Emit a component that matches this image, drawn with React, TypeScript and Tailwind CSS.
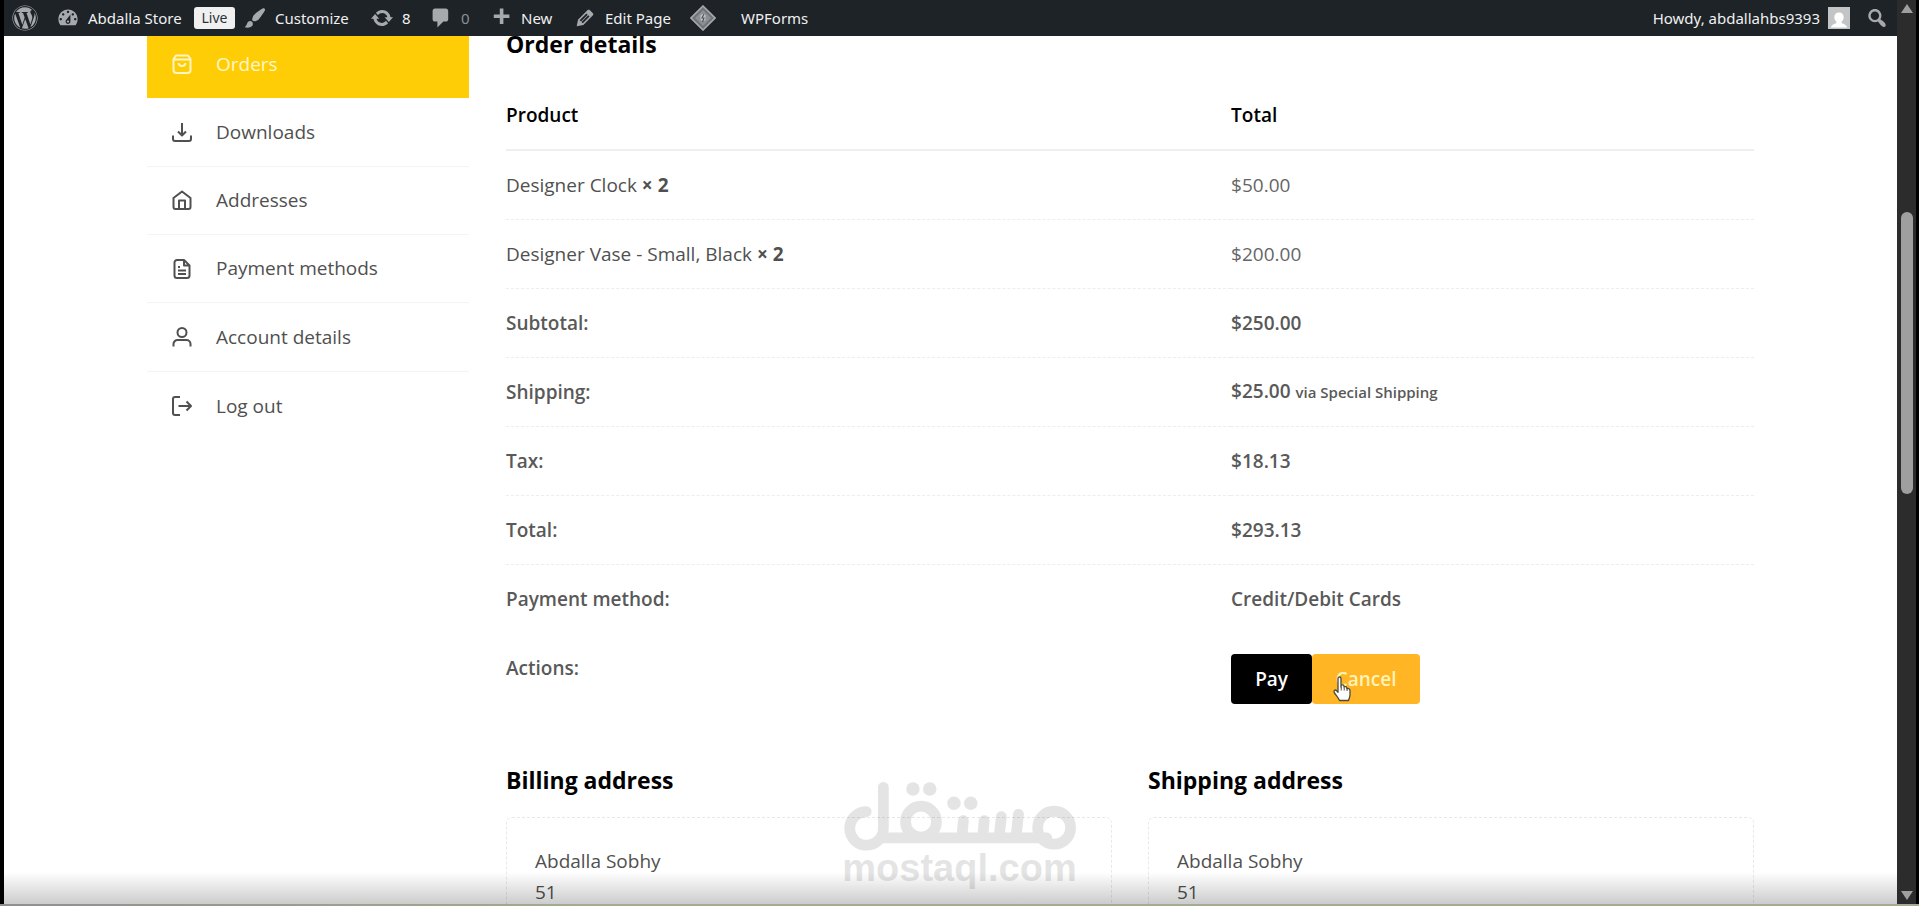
import React from 'react';
import { FaWordpress } from 'react-icons/fa';

const dashicons = {
  gauge:
    'M3.76 16h12.48c1.1-1.37 1.76-3.11 1.76-5 0-4.42-3.58-8-8-8s-8 3.58-8 8c0 1.89.66 3.63 1.76 5zM10 4c.55 0 1 .45 1 1s-.45 1-1 1-1-.45-1-1 .45-1 1-1zM6 6c.55 0 1 .45 1 1s-.45 1-1 1-1-.45-1-1 .45-1 1-1zm8 0c.55 0 1 .45 1 1s-.45 1-1 1-1-.45-1-1 .45-1 1-1zm-5.37 5.55L12 7v6c0 1.1-.9 2-2 2s-2-.9-2-2c0-.57.24-1.08.63-1.45zM4 10c.55 0 1 .45 1 1s-.45 1-1 1-1-.45-1-1 .45-1 1-1zm12 0c.55 0 1 .45 1 1s-.45 1-1 1-1-.45-1-1 .45-1 1-1zm-5 3c0-.55-.45-1-1-1s-1 .45-1 1 .45 1 1 1 1-.45 1-1z',
  brush:
    'M18.33 3.57s.27-.8-.31-1.36c-.53-.52-1.22-.24-1.22-.24-.61.3-5.76 3.47-7.67 5.57-.86.96-2.06 3.79-1.09 4.82.92.98 3.96-.17 4.79-1 2.06-2.06 5.21-7.17 5.5-7.79zM1.4 17.65c2.37-1.56 1.46-3.41 3.23-4.64.93-.65 2.22-.62 3.08.29.63.67.8 2.57-.16 3.46-1.57 1.45-4 1.55-6.15.89z',
  update:
    'M10.2 3.28c3.53 0 6.43 2.61 6.92 6h2.08l-3.5 4-3.5-4h2.32c-.45-1.97-2.21-3.45-4.32-3.45-1.45 0-2.73.71-3.54 1.78L4.95 5.66C6.23 4.2 8.11 3.28 10.2 3.28zm-.4 13.44c-3.52 0-6.43-2.61-6.92-6H.8l3.5-4c1.17 1.33 2.33 2.67 3.5 4H5.48c.45 1.97 2.21 3.45 4.32 3.45 1.45 0 2.73-.71 3.54-1.78l1.71 1.95c-1.28 1.46-3.15 2.38-5.25 2.38z',
  comment: 'M5 2h9c1.1 0 2 .9 2 2v7c0 1.1-.9 2-2 2h-2l-5 5v-5H5c-1.1 0-2-.9-2-2V4c0-1.1.9-2 2-2z',
  plus: 'M17 7v3h-5v5H9v-5H4V7h5V2h3v5h5z',
  edit:
    'M13.89 3.39l2.71 2.72c.46.46.42 1.24.03 1.64l-8.01 8.02-5.56 1.16 1.16-5.58s7.6-7.63 7.99-8.03c.39-.39 1.22-.39 1.68.07zm-2.73 2.79l-5.59 5.61 1.11 1.11 5.54-5.65zm-2.97 8.23l5.58-5.6-1.07-1.08-5.59 5.6z',
  search:
    'M12.14 4.18c1.87 1.87 2.11 4.75.72 6.89.12.1.22.21.36.31.2.16.47.36.81.59.34.24.56.39.66.47.42.31.73.57.94.78.32.32.6.65.84 1 .25.35.44.69.59 1.04.14.35.21.68.18 1-.02.32-.14.59-.36.81s-.49.34-.81.36c-.31.02-.65-.04-.99-.19-.35-.14-.7-.34-1.04-.59-.35-.24-.68-.52-1-.84-.21-.21-.47-.52-.77-.93-.1-.13-.25-.35-.47-.66-.22-.32-.4-.57-.56-.78-.16-.2-.29-.35-.44-.5-2.07 1.09-4.69.76-6.44-.98-2.14-2.15-2.14-5.64 0-7.78 2.15-2.15 5.63-2.15 7.78 0zm-1.41 6.36c1.36-1.37 1.36-3.58 0-4.95-1.37-1.37-3.59-1.37-4.95 0-1.37 1.37-1.37 3.58 0 4.95 1.36 1.37 3.58 1.37 4.95 0z',
};

function Dashicon({ name }: { name: keyof typeof dashicons }) {
  return (
    <svg viewBox="0 0 20 20" className="size-6 shrink-0 fill-[#a7aaad]" aria-hidden="true">
      <path d={dashicons[name]} />
    </svg>
  );
}

function AdminBar() {
  return (
    <header className="relative z-10 flex h-9 shrink-0 items-center justify-between bg-[#1d2327] pl-2 pr-2 font-['Noto_Sans','Open_Sans',sans-serif] text-[15px] leading-5 text-[#f0f0f1]">
      <nav className="flex items-center" aria-label="Toolbar">
        <a href="#about" aria-label="About WordPress" className="mr-[18px]">
          <FaWordpress className="size-[26px] text-[#a7aaad]" />
        </a>
        <a href="#store" className="mr-2 flex items-center gap-2">
          <Dashicon name="gauge" />
          <span className="w-[98px] whitespace-nowrap">Abdalla Store</span>
          <span className="flex h-[22px] w-[41px] items-center justify-center rounded-[3px] bg-[#f0f0f1] text-sm text-[#2c3338]">
            Live
          </span>
        </a>
        <a href="#customize" className="mr-[18px] flex items-center gap-2">
          <Dashicon name="brush" />
          <span className="w-[77px]">Customize</span>
        </a>
        <a href="#updates" className="mr-[17px] flex items-center gap-2">
          <Dashicon name="update" />
          <span className="w-[10px]">8</span>
        </a>
        <a href="#comments" className="mr-[18px] flex items-center gap-2">
          <Dashicon name="comment" />
          <span className="w-[10px] text-[#8c8f94]">0</span>
        </a>
        <a href="#new" className="mr-[18px] flex items-center gap-2">
          <Dashicon name="plus" />
          <span className="w-[34px]">New</span>
        </a>
        <a href="#edit" className="mr-4 flex items-center gap-2">
          <Dashicon name="edit" />
          <span className="w-[69px] whitespace-nowrap">Edit Page</span>
        </a>
        <a href="#performance" aria-label="Performance" className="mr-[25px]">
          <svg viewBox="0 0 26 26" className="size-[26px]" aria-hidden="true">
            <path d="M13 1 25 13 13 25 1 13z" fill="#6f7376" stroke="#a7aaad" strokeWidth="1.6" />
            <path d="M13 5 21 13 13 21 5 13z" fill="#8d9093" />
            <path d="M10.5 10.5c1-2 4-2 5 0v4c-1 2-4 2-5 0z" fill="#c3c4c7" />
            <path d="M13.8 9.2 12 13h2l-1.5 4" fill="none" stroke="#50575e" strokeWidth="1.2" />
          </svg>
        </a>
        <a href="#wpforms">WPForms</a>
      </nav>
      <div className="flex items-center gap-[15px]">
        <a href="#profile" className="flex items-center gap-2">
          <span>Howdy, abdallahbs9393</span>
          <svg viewBox="0 0 22 22" className="size-[22px]" aria-hidden="true">
            <path d="M0 0h22v22H0z" fill="#c3c4c5" />
            <path
              d="M11 5.5c2.800 0 4.700 2 4.700 4.700 0 1.800-.8 3.300-2 4.200v1.800c2.500.7 4.800 1.800 5.600 4.300H2.700c.8-2.500 3.100-3.600 5.600-4.300v-1.800c-1.200-.9-2-2.400-2-4.200 0-2.700 1.900-4.700 4.700-4.700z"
              fill="#fff"
            />
          </svg>
        </a>
        <button type="button" aria-label="Search">
          <Dashicon name="search" />
        </button>
      </div>
    </header>
  );
}

const menu = [
  {
    label: 'Orders',
    icon: (
      <>
        <path d="M4 1.500h12l2.500 3.500v11a3 3 0 0 1-3 3h-11a3 3 0 0 1-3-3V5z" />
        <path d="M1.500 5.500h17M6.500 9c.5 4 6.500 4 7 0" />
      </>
    ),
  },
  { label: 'Downloads', icon: <path d="M10 1v12M6 9.500l4 4 4-4M1 13.500V17a2 2 0 0 0 2 2h14a2 2 0 0 0 2-2v-3.500" /> },
  {
    label: 'Addresses',
    icon: <path d="M1.500 8 10 1.500 18.500 8v9a2 2 0 0 1-2 2h-13a2 2 0 0 1-2-2zM7 19v-8.500h6V19" />,
  },
  {
    label: 'Payment methods',
    icon: (
      <path d="M12 1H5a2.500 2.500 0 0 0-2.500 2.500v13A2.500 2.500 0 0 0 5 19h10a2.500 2.500 0 0 0 2.500-2.500v-10zM12 1v5.500h5.500M6 8h2M6 11.500h8M6 15h8" />
    ),
  },
  {
    label: 'Account details',
    icon: (
      <>
        <circle cx="10" cy="5.500" r="4.500" />
        <path d="M1.500 19.500V17a4 4 0 0 1 4-4h9a4 4 0 0 1 4 4v2.500" />
      </>
    ),
  },
  { label: 'Log out', icon: <path d="M8 1H3a2 2 0 0 0-2 2v14a2 2 0 0 0 2 2h5M6.500 10H19M14.500 5.500 19 10l-4.500 4.500" /> },
];

function AccountMenu() {
  return (
    <nav aria-label="Account pages" className="w-[322px] shrink-0">
      <ul className="grid h-[410px] auto-rows-fr text-[19px]">
        {menu.map(({ label, icon }, i) => (
          <li key={label} className={i > 0 && i < menu.length - 1 ? 'border-b border-[#f4f4f4]' : ''}>
            <a
              href={`#${label}`}
              className={
                i === 0
                  ? 'flex h-full items-center gap-6 bg-[#ffcd05] pl-[25px] text-[#fff6c8]'
                  : 'flex h-full items-center gap-6 pl-[25px] text-[#505050]'
              }
            >
              <svg
                viewBox="0 0 20 20"
                className="size-5 overflow-visible fill-none stroke-current stroke-2"
                strokeLinejoin="round"
                aria-hidden="true"
              >
                {icon}
              </svg>
              {label}
            </a>
          </li>
        ))}
      </ul>
    </nav>
  );
}

const items = [
  { name: 'Designer Clock', qty: 2, total: '$50.00' },
  { name: 'Designer Vase - Small, Black', qty: 2, total: '$200.00' },
];

const totals = [
  { label: 'Subtotal:', value: '$250.00' },
  { label: 'Shipping:', value: '$25.00', note: 'via Special Shipping' },
  { label: 'Tax:', value: '$18.13' },
  { label: 'Total:', value: '$293.13' },
];

function HandPointer() {
  return (
    <svg viewBox="0 0 20 26" className="absolute left-5 top-[22px] h-[26px] w-5" aria-hidden="true">
      <path
        d="M6 2.500c0-2 3-2 3 0V11l.2-1.500c.6-1 2.600-.8 2.800.6l.1 1c.7-.9 2.600-.6 2.700.7l.1 1c.9-.7 3.100-.3 3.100 1.700v4.500c0 2-1 3.500-1.500 5.500h-9c-.5-2-2.500-4-5-7.500-1.500-2.200.6-3.800 2.200-2.300L6 16.200z"
        fill="#fff"
        stroke="#4a4a3a"
        strokeWidth="1.300"
        strokeLinejoin="round"
      />
      <path d="M9.200 11v3.500M12.200 11.500v3M15.100 12.500v2.500" stroke="#4a4a3a" strokeWidth="1" />
    </svg>
  );
}

function OrderTable() {
  return (
    <table className="w-full table-fixed border-collapse text-left text-[19px] leading-7">
      <thead>
        <tr className="h-[70px] border-b-2 border-[#efefef] text-black">
          <th className="w-[58.1%] font-semibold">Product</th>
          <th className="font-semibold">Total</th>
        </tr>
      </thead>
      <tbody>
        {items.map((item) => (
          <tr key={item.name} className="h-[69px] border-b border-dashed border-[#ededed]">
            <td>
              {item.name} <strong className="font-bold">×&nbsp;{item.qty}</strong>
            </td>
            <td className="text-[#666]">{item.total}</td>
          </tr>
        ))}
        {totals.map((row) => (
          <tr key={row.label} className="h-[69px] border-b border-dashed border-[#ededed] text-[#595959]">
            <th className="font-semibold">{row.label}</th>
            <td className="font-semibold">
              {row.value} {row.note && <small className="text-[15px]">{row.note}</small>}
            </td>
          </tr>
        ))}
        <tr className="h-[70px] text-[#595959]">
          <th className="font-semibold">Payment method:</th>
          <td className="font-semibold">Credit/Debit Cards</td>
        </tr>
        <tr className="text-[#595959]">
          <th className="pt-5 align-top font-semibold">Actions:</th>
          <td className="pt-5">
            <div className="flex font-semibold">
              <button type="button" className="h-[50px] w-[81px] rounded bg-black text-white">
                Pay
              </button>
              <button type="button" className="relative h-[50px] w-[108px] rounded bg-[#ffb524] text-[#fff3b8]">
                Cancel
                <HandPointer />
              </button>
            </div>
          </td>
        </tr>
      </tbody>
    </table>
  );
}

function Address({ title }: { title: string }) {
  return (
    <section>
      <h2 className="mb-[23px] text-[23px] font-bold leading-7 text-black">{title}</h2>
      <address className="min-h-40 rounded-md border border-dashed border-[#e8e8e8] px-7 pt-7 text-[19px] not-italic leading-[31px]">
        Abdalla Sobhy
        <br />
        51
      </address>
    </section>
  );
}

function Watermark() {
  return (
    <div className="pointer-events-none absolute left-1/2 top-[782px] flex w-[232px] -translate-x-1/2 flex-col items-center opacity-10">
      <svg viewBox="132 66 690 204" className="w-full" fill="none" stroke="#000" strokeWidth="32" strokeLinecap="round" aria-label="مستقل">
        <path d="M198 154A50 50 0 1 0 249 203V82M240 232H735M487 181 483 225M549 181 545 225M600 169 594 225M651 162 644 225" />
        <circle cx="361" cy="184" r="46" />
        <circle cx="757" cy="202" r="49" />
        <g fill="#000" stroke="none">
          <circle cx="337" cy="87" r="20" />
          <circle cx="387" cy="87" r="20" />
          <circle cx="459" cy="129" r="20" />
          <circle cx="509" cy="129" r="20" />
        </g>
      </svg>
      <span className="font-['Liberation_Sans',sans-serif] text-[38px] font-bold leading-[34px] text-black">mostaql.com</span>
    </div>
  );
}

function Scrollbar() {
  return (
    <div className="flex w-[19px] shrink-0 flex-col items-center bg-[#2c2c2c] py-1" aria-hidden="true">
      <svg viewBox="0 0 12 9" className="h-[9px] w-3 fill-[#9f9f9f]">
        <path d="M6 0 12 9H0z" />
      </svg>
      <div className="flex w-3 grow flex-col">
        <div className="grow-[198]" />
        <div className="grow-[281] rounded-full bg-[#9f9f9f]" />
        <div className="grow-[395]" />
      </div>
      <svg viewBox="0 0 12 9" className="h-[9px] w-3 fill-[#9f9f9f]">
        <path d="M6 9 12 0H0z" />
      </svg>
    </div>
  );
}

export default function App() {
  return (
    <div className="relative flex h-screen flex-col overflow-hidden bg-black font-['Open_Sans','Noto_Sans',sans-serif] text-[#505050]">
      <div className="flex min-h-0 grow pl-1 pr-[3px]">
        <div className="relative flex min-w-0 grow flex-col overflow-hidden bg-white">
          <AdminBar />
          <div className="mx-auto -mt-[6px] flex w-full max-w-[1607px] items-start gap-[37px]">
            <AccountMenu />
            <main className="min-w-0 grow">
              <h2 className="mb-[22px] text-[23px] font-bold leading-7 text-black">Order details</h2>
              <OrderTable />
              <div className="mt-[62px] grid grid-cols-2 gap-9">
                <Address title="Billing address" />
                <Address title="Shipping address" />
              </div>
            </main>
          </div>
          <div className="pointer-events-none absolute inset-x-0 bottom-0 h-8 bg-linear-to-b from-transparent to-black/20" />
        </div>
        <Scrollbar />
      </div>
      <div className="h-0.5 shrink-0 bg-linear-to-r from-[#8f8f8f] to-[#a3ab90] to-30%" />
      <Watermark />
    </div>
  );
}
